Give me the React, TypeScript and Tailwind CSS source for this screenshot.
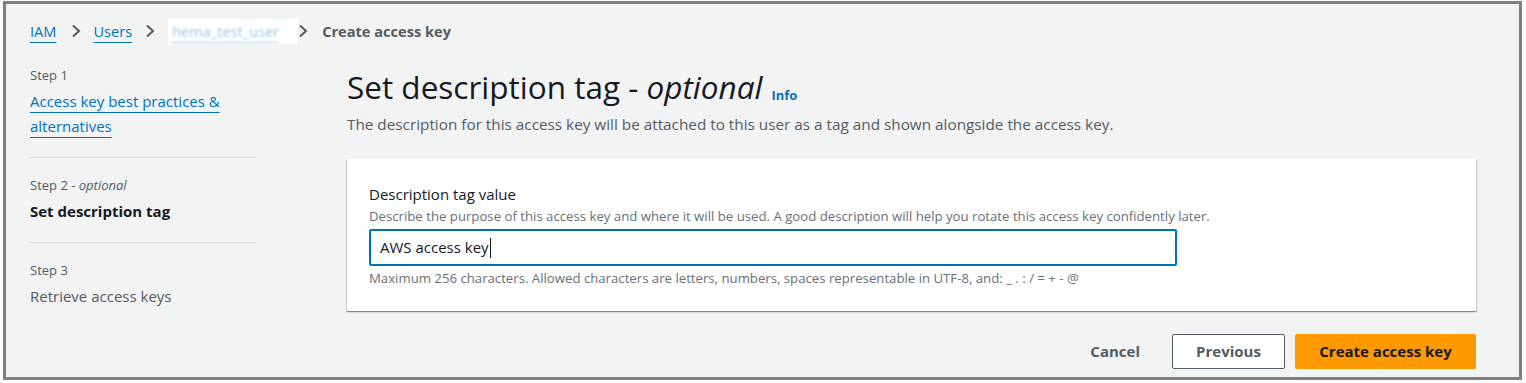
const font = { fontFamily: '"Open Sans", "Noto Sans", sans-serif' };

function Chevron({ className }: { className: string }) {
  return (
    <svg viewBox="0 0 10 14" className={`h-[14px] w-[10px] shrink-0 ${className}`} fill="none">
      <polyline points="2,1.5 8,7 2,12.5" stroke="#545b64" strokeWidth="2" strokeLinejoin="miter" />
    </svg>
  );
}

function Crumbs() {
  return (
    <nav className="flex h-[24px] items-center text-[14.6px] leading-[24px]">
      <a className="text-[#0073bb] underline underline-offset-[5px] decoration-1">IAM</a>
      <Chevron className="ml-[15px] mr-[12px]" />
      <a className="text-[#0073bb] underline underline-offset-[5px] decoration-1">Users</a>
      <Chevron className="ml-[13px] mr-[13px]" />
      <span className="flex h-[25px] w-[130px] items-center overflow-hidden bg-white pl-[4px]">
        <span className="inline-block text-[#0073bb] underline underline-offset-[5px] decoration-1 opacity-40 blur-[1px]">
          hema_test_user
        </span>
      </span>
      <Chevron className="mr-[14px]" />
      <span className="font-bold text-[#545b64]">Create access key</span>
    </nav>
  );
}

function SideNav() {
  return (
    <aside className="w-[226px] shrink-0 text-[15px]">
      <div className="pb-[18px]">
        <div className="text-[13px] leading-[20px] text-[#545b64]">Step 1</div>
        <a className="mt-[4px] block leading-[25px] text-[#0073bb] underline underline-offset-[5px] decoration-1">
          Access key best practices &amp; alternatives
        </a>
      </div>
      <div className="border-t border-[#d5dbdb] pb-[18px] pt-[17px]">
        <div className="text-[13px] leading-[20px] text-[#545b64]">
          Step 2 - <i>optional</i>
        </div>
        <div className="mt-[4px] font-bold leading-[25px] text-[#16191f]">Set description tag</div>
      </div>
      <div className="border-t border-[#d5dbdb] pb-[16px] pt-[17px]">
        <div className="text-[13px] leading-[20px] text-[#545b64]">Step 3</div>
        <div className="mt-[4px] leading-[25px] text-[#545b64]">Retrieve access keys</div>
      </div>
    </aside>
  );
}

export default function App() {
  return (
    <div className="h-[383px] w-[1526px] bg-white pl-[3px] pt-[1px]" style={font}>
      <div className="h-[379px] w-[1519px] border-[3px] border-[#7f7f7f] bg-[#f2f3f3] pl-[24px] pt-[15px]">
        <Crumbs />
        <div className="mt-[22px] flex">
          <SideNav />
          <main className="ml-[91px] mt-[2px] w-[1129px] text-[15px]">
            <div className="flex items-end">
              <h1 className="text-[31.5px] leading-[40px] text-[#16191f]">
                Set description tag - <i>optional</i>
              </h1>
              <span className="mb-[2px] ml-[9px] text-[13px] font-bold text-[#0073bb]">Info</span>
            </div>
            <p className="mt-[5px] text-[15.3px] leading-[24px] text-[#545b64]">
              The description for this access key will be attached to this user as a tag and shown alongside the access key.
            </p>
            <section className="mt-[23px] h-[152px] bg-white px-[22px] pt-[24px] shadow-[0_1px_1px_0_rgba(0,28,36,0.3),1px_1px_1px_0_rgba(0,28,36,0.15),-1px_1px_1px_0_rgba(0,28,36,0.15)]">
              <div className="leading-[22px] text-[#16191f]">Description tag value</div>
              <div className="mt-[1px] text-[13.2px] leading-[20px] text-[#687078]">
                Describe the purpose of this access key and where it will be used. A good description will help you rotate this access key confidently later.
              </div>
              <div className="mt-[3px] flex h-[37px] w-[808px] items-center rounded-[2px] border-2 border-[#0073bb] px-[9px] text-[#16191f]">
                AWS access key
                <span className="ml-[1px] inline-block h-[20px] w-[1px] bg-[#16191f]" />
              </div>
              <div className="mt-[2px] text-[13.2px] leading-[20px] text-[#687078]">
                Maximum 256 characters. Allowed characters are letters, numbers, spaces representable in UTF-8, and: _ . : / = + - @
              </div>
            </section>
            <div className="mt-[23px] flex items-center justify-end">
              <button className="mr-[32px] font-bold text-[#545b64]">Cancel</button>
              <button className="mr-[10px] h-[35px] w-[113px] rounded-[2px] border border-[#545b64] bg-white font-bold text-[#545b64]">
                Previous
              </button>
              <button className="h-[35px] w-[181px] rounded-[2px] bg-[#ff9900] font-bold text-[#16191f]">
                Create access key
              </button>
            </div>
          </main>
        </div>
      </div>
    </div>
  );
}
